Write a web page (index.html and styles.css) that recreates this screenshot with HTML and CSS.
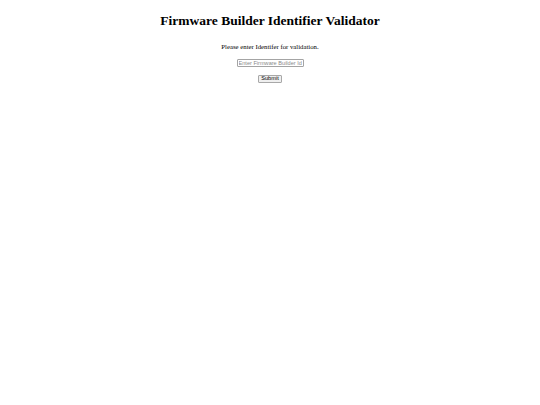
FILE: index.html
```html
<!DOCTYPE html>
<html>
<head>
<meta charset="utf-8">
<link rel="stylesheet" href="styles.css">
<title>Firmware Builder Identifier Validator</title>
</head>
<body>
<div class="page">
  <h1 class="title">Firmware Builder Identifier Validator</h1>
  <p class="prompt">Please enter Identifer for validation.</p>
  <form class="form">
    <input class="field" type="text" placeholder="Enter Firmware Builder Id">
    <button class="submit" type="button">Submit</button>
  </form>
</div>
</body>
</html>
```
FILE: styles.css
```css
html, body {
  margin: 0;
  padding: 0;
  background: #ffffff;
}
.page {
  display: flex;
  flex-direction: column;
  align-items: center;
  font-family: "Liberation Serif", "Times New Roman", serif;
  color: #000;
  padding-top: 12.5px;
}
.title {
  font-size: 13.5px;
  font-weight: bold;
  margin: 0;
  line-height: 15px;
}
.prompt {
  font-size: 6.75px;
  margin: 15.5px 0 0 0;
  line-height: 7.8px;
}
.form {
  display: flex;
  flex-direction: column;
  align-items: center;
  gap: 8.2px;
  margin-top: 7.8px;
}
.field {
  box-sizing: border-box;
  width: 67px;
  height: 8.2px;
  font-family: "Liberation Sans", Arial, sans-serif;
  font-size: 5.6px;
  padding: 0 1px;
  border: 0.8px solid #a4a4a4;
  border-radius: 1px;
  margin: 0;
  background: #fff;
}
.field::placeholder {
  color: #8a8a8a;
}
.submit {
  box-sizing: border-box;
  width: 24.5px;
  height: 8.5px;
  font-family: "Liberation Sans", Arial, sans-serif;
  font-size: 5.6px;
  padding: 0;
  border: 0.8px solid #a8a8a8;
  border-radius: 1px;
  background: #efefef;
  color: #000;
  margin: 0;
  line-height: 1;
}
```
